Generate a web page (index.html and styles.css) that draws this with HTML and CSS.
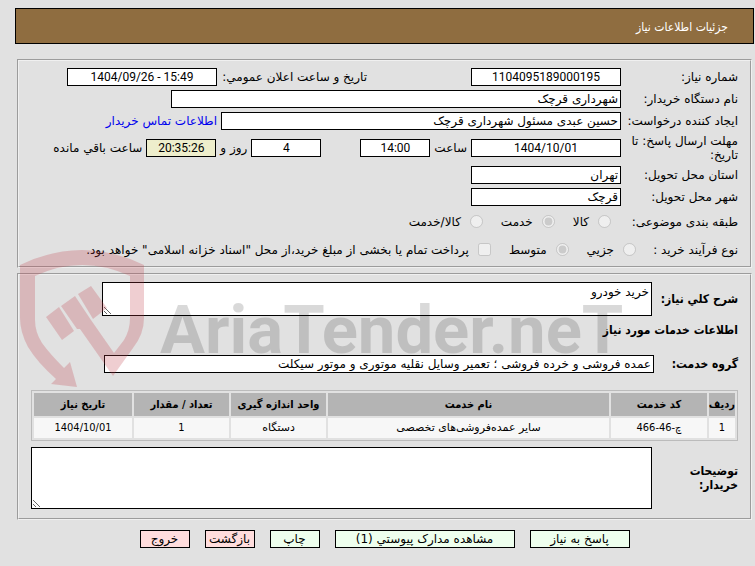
FILE: index.html
```html
<!DOCTYPE html>
<html lang="fa" dir="rtl">
<head>
  <meta charset="UTF-8">
  <meta name="viewport" content="width=device-width, initial-scale=1">
  <title>جزئیات اطلاعات نیاز</title>
  <link rel="stylesheet" href="styles.css">
</head>
<body>

<header class="title-bar">جزئیات اطلاعات نیاز</header>

<main class="content">
  <form class="panel info">
    <div class="row">
      <label class="name" for="needNo">شماره نیاز:</label>
      <input class="box medium center" type="text" id="needNo" value="1104095189000195" readonly>
      <div class="announce">
        <label for="announceDate">تاریخ و ساعت اعلان عمومي:</label>
        <input class="box medium center" type="text" id="announceDate" value="1404/09/26 - 15:49" dir="ltr" readonly>
      </div>
    </div>

    <div class="row">
      <label class="name" for="buyer">نام دستگاه خریدار:</label>
      <input class="box long" type="text" id="buyer" value="شهرداری قرچک" readonly>
    </div>

    <div class="row">
      <label class="name" for="creator">ایجاد کننده درخواست:</label>
      <input class="box creator" type="text" id="creator" value="حسین عبدی مسئول شهرداری قرچک" readonly>
      <a class="contact" href="#contact">اطلاعات تماس خریدار</a>
    </div>

    <div class="row deadline">
      <label class="name" for="deadlineDate">مهلت ارسال پاسخ: تا تاریخ:</label>
      <input class="box medium center" type="text" id="deadlineDate" value="1404/10/01" readonly>
      <label for="deadlineHour">ساعت</label>
      <input class="box short center" type="text" id="deadlineHour" value="14:00" readonly>
      <div class="remaining">
        <input class="box short center" type="text" id="daysLeft" value="4" readonly>
        <label for="daysLeft">روز و</label>
        <input class="box short center timer" type="text" id="timeLeft" value="20:35:26" readonly>
        <label for="timeLeft">ساعت باقي مانده</label>
      </div>
    </div>

    <div class="row">
      <label class="name" for="province">استان محل تحویل:</label>
      <input class="box medium" type="text" id="province" value="تهران" readonly>
    </div>

    <div class="row">
      <label class="name" for="city">شهر محل تحویل:</label>
      <input class="box medium" type="text" id="city" value="قرچک" readonly>
    </div>

    <div class="row options" role="radiogroup" aria-labelledby="categoryName">
      <span class="name" id="categoryName">طبقه بندی موضوعی:</span>
      <label class="option"><input type="radio" name="category" disabled> کالا</label>
      <label class="option"><input type="radio" name="category" checked disabled> خدمت</label>
      <label class="option"><input type="radio" name="category" disabled> کالا/خدمت</label>
    </div>

    <div class="row options process" role="radiogroup" aria-labelledby="processName">
      <span class="name" id="processName">نوع فرآیند خرید :</span>
      <label class="option"><input type="radio" name="process" disabled> جزیي</label>
      <label class="option"><input type="radio" name="process" checked disabled> متوسط</label>
      <label class="option"><input type="checkbox" disabled> پرداخت تمام یا بخشی از مبلغ خرید،از محل "اسناد خزانه اسلامی" خواهد بود.</label>
    </div>
  </form>

  <section class="panel need">
    <div class="row summary">
      <label class="strong" for="summary">شرح کلي نیاز:</label>
      <textarea class="area" id="summary" readonly>خرید خودرو</textarea>
    </div>

    <h2>اطلاعات خدمات مورد نیاز</h2>

    <div class="row group">
      <label class="strong" for="group">گروه خدمت:</label>
      <input class="box" type="text" id="group" value="عمده فروشی و خرده فروشی ؛ تعمیر وسایل نقلیه موتوری و موتور سیکلت" readonly>
    </div>

    <table class="services">
      <thead>
        <tr>
          <th class="col-row">ردیف</th>
          <th class="col-code">کد خدمت</th>
          <th>نام خدمت</th>
          <th class="col-unit">واحد اندازه گیری</th>
          <th class="col-count">تعداد / مقدار</th>
          <th class="col-date">تاریخ نیاز</th>
        </tr>
      </thead>
      <tbody>
        <tr>
          <td class="number">1</td>
          <td class="number">چ-46-466</td>
          <td>سایر عمده‌فروشی‌های تخصصی</td>
          <td>دستگاه</td>
          <td class="number">1</td>
          <td class="number">1404/10/01</td>
        </tr>
      </tbody>
    </table>

    <div class="row notes">
      <label class="strong" for="notes">توضیحات خریدار:</label>
      <textarea class="area" id="notes" readonly></textarea>
    </div>

    <div class="watermark" dir="ltr" aria-hidden="true">
      <svg class="shield" viewBox="0 0 126 139" width="126" height="139">
        <path d="M0 15 Q62 -15 124 15 V68 Q124 84 113 98 L93 126 L60 79 H57 L41 56 L55 46 L71 70 L94 103 L104 90 Q110 80 110 68 V26 Q62 4 15 26 V70 Q15 82 22 93 Q30 104 44 118 L50 112 L57 137 L31 134 L36 129 Q17 112 8 97 Q0 82 0 68 Z"/>
        <path d="M26 67 L39 57 L54 81 L42 90 Z M58 44 L71 36 L87 58 L73 69 Z"/>
      </svg>
      <span class="brand">AriaTender.neT</span>
    </div>
  </section>

  <div class="actions">
    <button class="btn reply" type="button">پاسخ به نیاز</button>
    <button class="btn docs" type="button">مشاهده مدارک پیوستي (1)</button>
    <button class="btn" type="button">چاپ</button>
    <button class="btn back" type="button">بازگشت</button>
    <button class="btn back" type="button">خروج</button>
  </div>
</main>

</body>
</html>
```
FILE: styles.css
```css
* {
  box-sizing: border-box;
}

body {
  margin: 0;
  padding: 8px 1px 0 15px;
  background: #e1e1e1;
  color: #000;
  font-family: "DejaVu Sans", sans-serif;
  font-size: 12px;
  line-height: 14px;
}

input, textarea, button {
  font: inherit;
  color: inherit;
}

.title-bar {
  height: 36px;
  padding: 0 25px;
  border: 1px solid #000;
  background: #8f6d40;
  color: #fff;
  font-family: "DejaVu Sans Condensed", sans-serif;
  line-height: 36px;
}

.content {
  padding: 15px 2px 0;
}

.panel {
  position: relative;
  border: 2px groove #f0f0f0;
  margin: 0 0 5px;
}

.info {
  display: flex;
  flex-direction: column;
  gap: 4px;
  height: 209px;
  padding: 7px 12px 0;
}

.row {
  display: flex;
  align-items: center;
}

.name {
  width: 117px;
  flex: none;
}

.box {
  height: 18px;
  min-width: 0;
  padding: 0 2px;
  border: 1px solid #000;
  border-radius: 0;
  background: #fff;
}

.center {
  font-family: Roboto, "DejaVu Sans", sans-serif;
  text-align: center;
}

.medium {
  width: 150px;
}

.short {
  width: 70px;
}

.long {
  width: 450px;
}

.creator {
  width: 400px;
}

.timer {
  background: #eeeecc;
}

.announce {
  display: flex;
  align-items: center;
  justify-content: space-between;
  width: 300px;
  margin-right: 104px;
}

.contact {
  margin-right: 4px;
  color: #0000ee;
  text-decoration: none;
}

.deadline {
  gap: 4px;
}

.deadline .name {
  margin-left: -4px;
}

.remaining {
  display: flex;
  align-items: center;
  gap: 4px;
  margin-right: 35px;
}

.options {
  gap: 18px;
  height: 24px;
}

.options .name {
  margin-left: -8px;
}

.process .name {
  width: 92px;
}

.option {
  display: flex;
  align-items: center;
  gap: 9px;
}

.option input {
  width: 13px;
  height: 13px;
  margin: 0 0 2px;
}

.need {
  height: 247px;
  padding: 7px 12px 0;
}

.strong, h2 {
  font-family: "DejaVu Sans Condensed", sans-serif;
  font-weight: bold;
}

h2 {
  margin: 7px 0 18px;
  font-size: 12px;
}

.area {
  padding: 2px;
  border: 1px solid #000;
  border-radius: 0;
  background: #fff;
  resize: both;
}

.summary .strong,
.notes .strong {
  width: 86px;
}

.group .strong {
  width: 84px;
}

.summary .area {
  width: 550px;
  height: 34px;
}

.group .box {
  width: 550px;
}

.services {
  width: 100%;
  margin: 17px 0 6px;
  border: 1px solid #bbb;
  border-spacing: 2px;
  table-layout: fixed;
  font-size: 11px;
  text-align: center;
}

.services th {
  height: 23px;
  padding: 0;
  background: #b4b4b4;
  font-family: "DejaVu Sans Condensed", sans-serif;
}

.services td {
  height: 20px;
  padding: 0;
  background: #f7f7f7;
}

.services .number {
  font-family: "DejaVu Sans Condensed", sans-serif;
}

.col-row { width: 26px; }
.col-code { width: 96px; }
.col-unit { width: 95px; }
.col-count { width: 95px; }
.col-date { width: 98px; }

.notes .area {
  flex: 1;
  height: 62px;
}

.watermark {
  position: absolute;
  top: -25px;
  left: 1px;
  display: flex;
  align-items: flex-end;
  pointer-events: none;
}

.shield {
  fill: rgba(190, 60, 70, 0.25);
}

.brand {
  margin-left: 14px;
  padding-bottom: 14px;
  color: rgba(0, 0, 0, 0.15);
  font-family: Roboto, "Liberation Sans", sans-serif;
  font-size: 67px;
  font-weight: bold;
  line-height: 90px;
}

.actions {
  display: flex;
  justify-content: center;
  gap: 15px;
  padding-top: 5px;
}

.btn {
  width: 50px;
  height: 18px;
  padding: 0;
  border: 1px solid #000;
  background: #eeffee;
}

.reply {
  width: 100px;
}

.docs {
  width: 180px;
}

.back {
  background: #ffdddd;
}
```
